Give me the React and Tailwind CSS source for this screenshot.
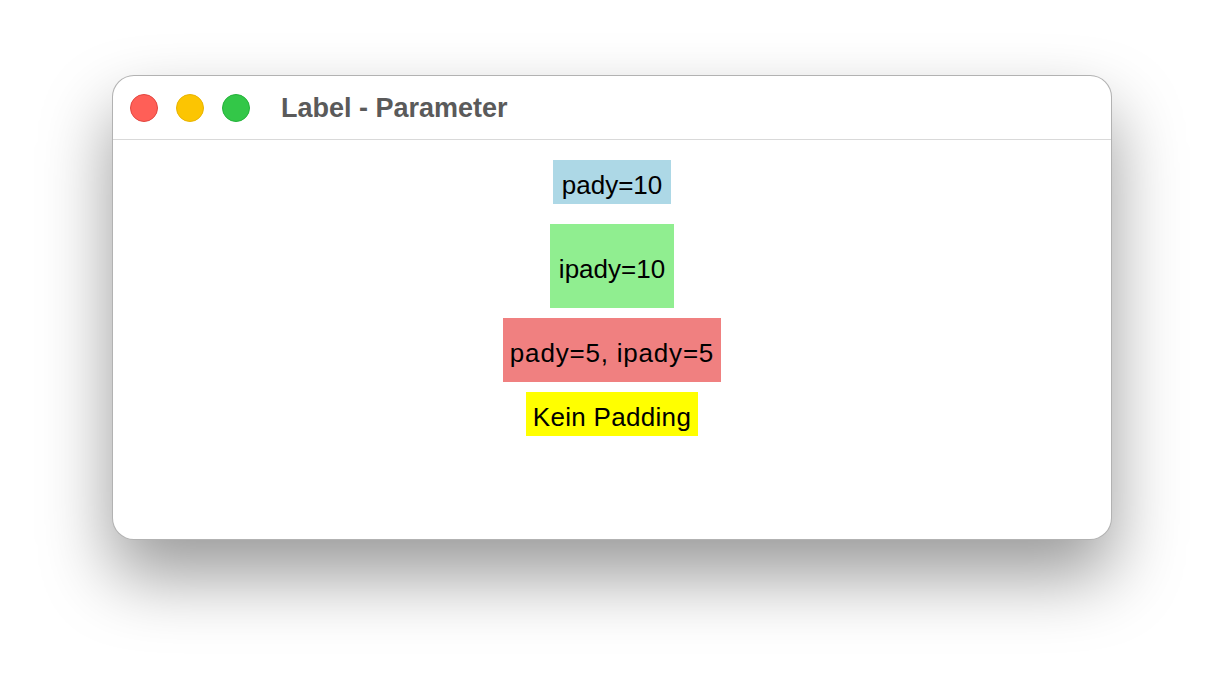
export default function App() {
    const labels = [
        { text: 'pady=10', cls: 'bg-[#add8e6] w-[118px] h-[44px] mt-[20px]' },
        { text: 'ipady=10', cls: 'bg-[#90ee90] w-[124px] h-[84px] mt-[20px]' },
        { text: 'pady=5, ipady=5', cls: 'bg-[#f08080] w-[218px] h-[64px] mt-[10px] tracking-[0.8px]' },
        { text: 'Kein Padding', cls: 'bg-[#ffff00] w-[172px] h-[44px] mt-[10px] tracking-[0.3px]' },
    ];

    return (
        <div className="w-[1224px] h-[688px] bg-white overflow-hidden font-['Liberation_Sans',Arial,sans-serif]">
            {/* Window */}
            <div className="mx-auto mt-[75px] w-[1000px] h-[465px] bg-white rounded-[22px] border border-black/30 shadow-[0_36px_70px_rgba(0,0,0,0.4)] flex flex-col overflow-hidden">
                {/* Title bar */}
                <div className="h-[64px] shrink-0 flex items-center pl-[17px] border-b border-[#d9d9d9]">
                    <div className="flex items-center gap-[18px]">
                        <span className="w-[28px] h-[28px] rounded-full bg-[#ff5f57] border border-[#e2463f]" />
                        <span className="w-[28px] h-[28px] rounded-full bg-[#fcc502] border border-[#e8b400]" />
                        <span className="w-[28px] h-[28px] rounded-full bg-[#33c748] border border-[#24b23a]" />
                    </div>
                    <span className="ml-[31px] mt-[2px] text-[27px] font-bold text-[#5a5a5a] leading-none">Label - Parameter</span>
                </div>

                {/* Content */}
                <div className="flex-1 flex flex-col items-center">
                    {labels.map((l) => (
                        <div key={l.text} className={`${l.cls} flex items-center justify-center text-[26px] text-black leading-none pt-[5px] whitespace-nowrap`}>
                            {l.text}
                        </div>
                    ))}
                </div>
            </div>
        </div>
    );
}
